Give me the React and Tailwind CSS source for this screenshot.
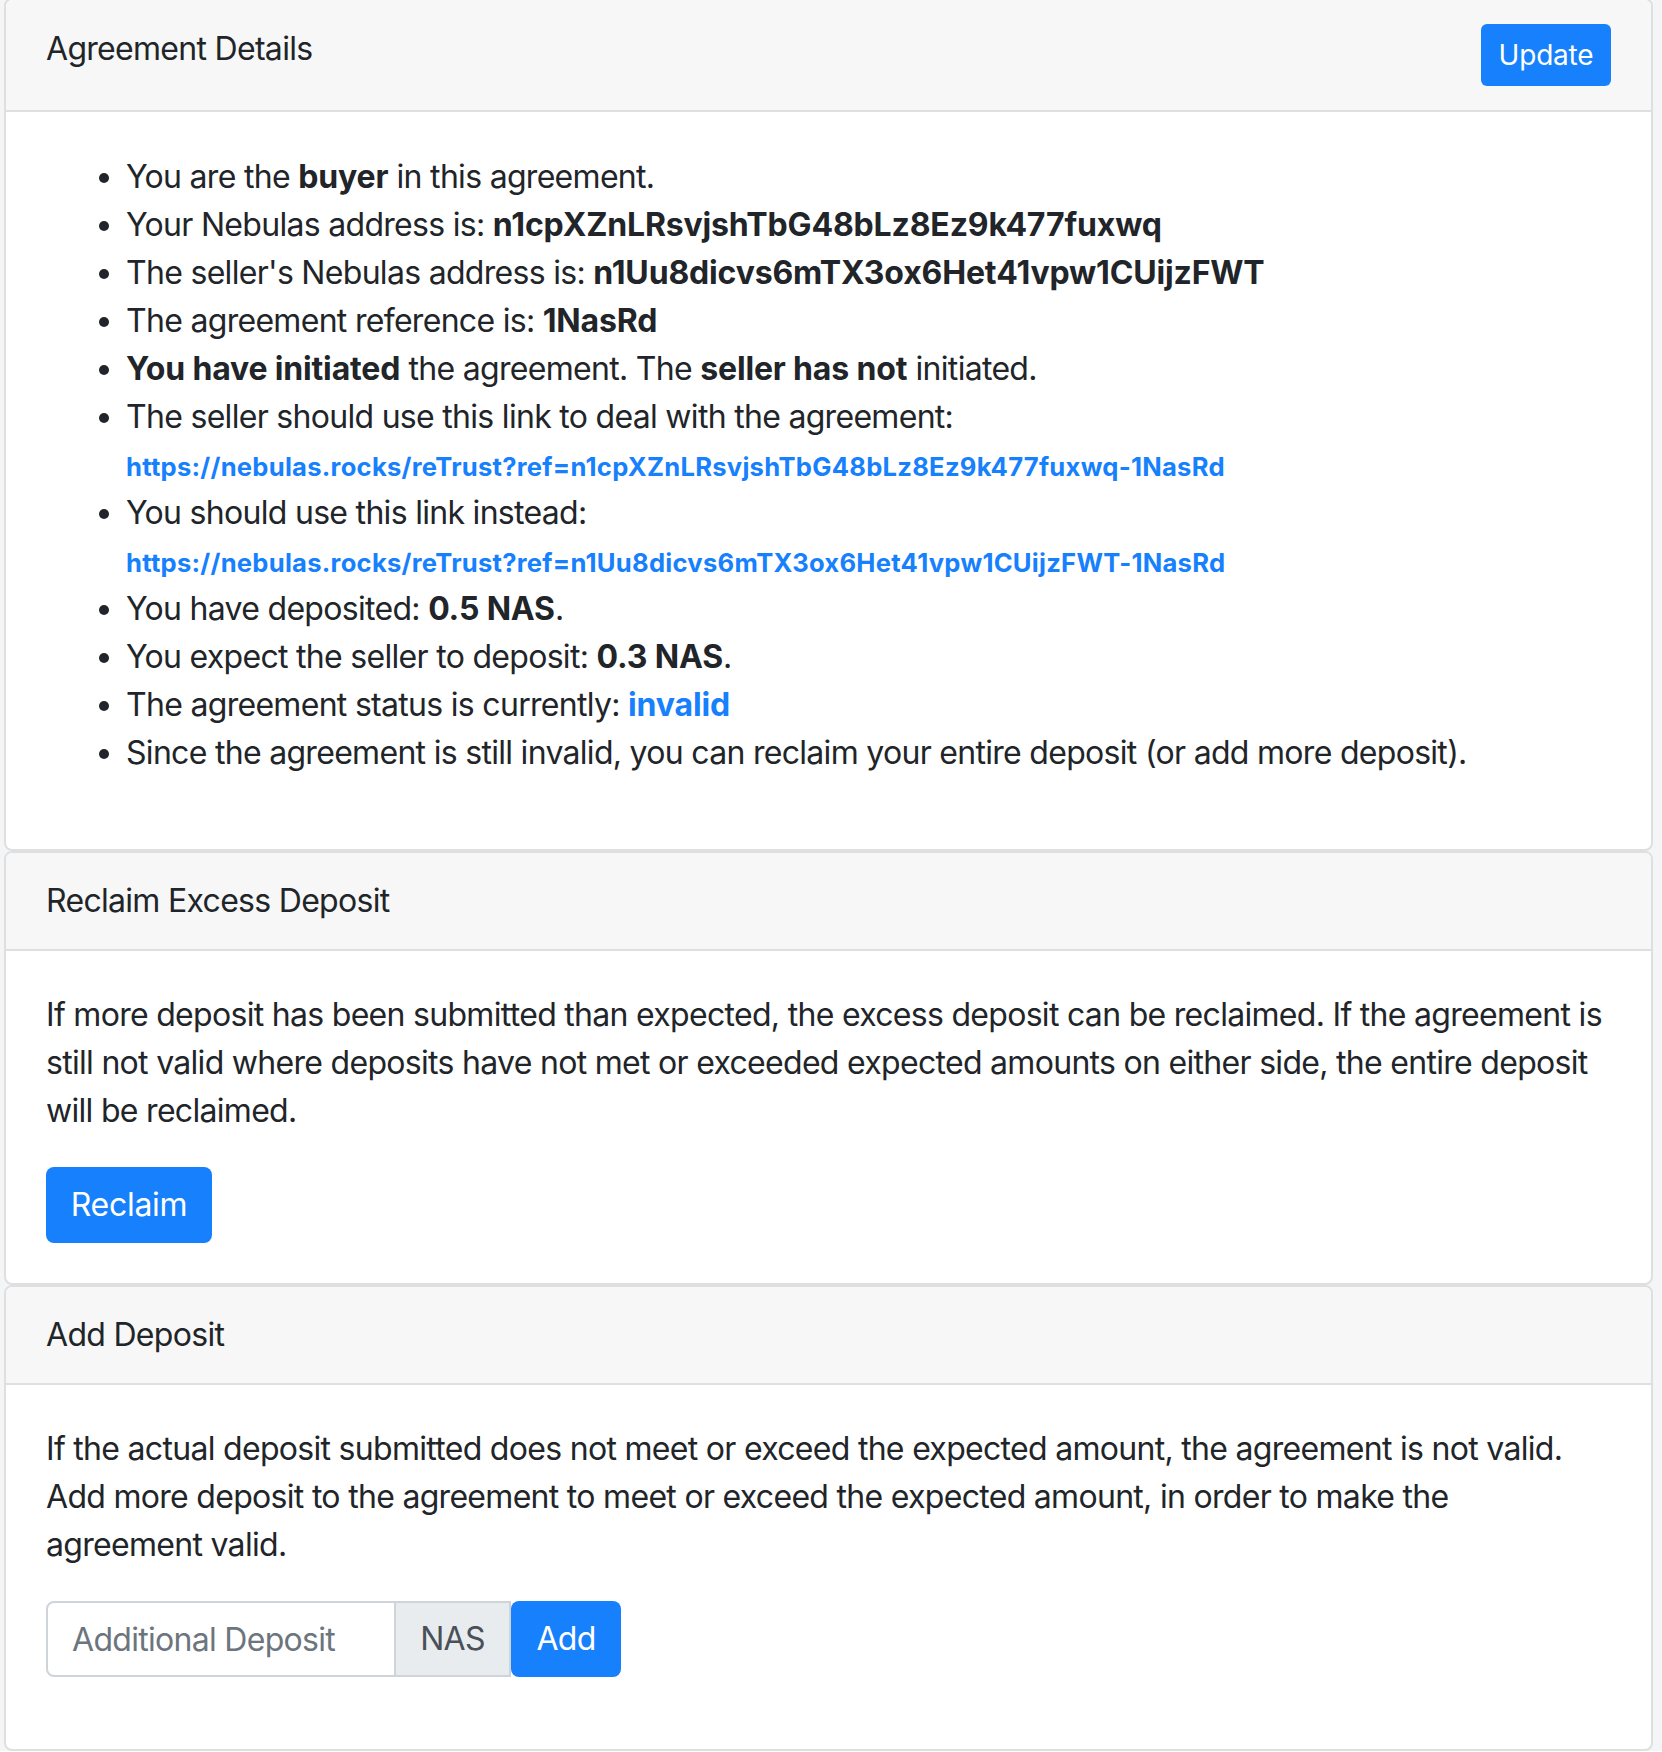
const blue = "text-[#1780fc]";

function CardHeader({ children }) {
  return (
    <div className="flex items-start justify-between border-b-2 border-[#dfdfdf] bg-[#f7f7f7] px-[40px] py-[24px]">
      {children}
    </div>
  );
}

function Card({ className = "", children }) {
  return (
    <div className={`overflow-hidden rounded-[8px] border-2 border-[#dfdfdf] bg-white ${className}`}>
      {children}
    </div>
  );
}

function B({ className = "", children }) {
  return <b className={`font-bold tracking-[-0.16px] ${className}`}>{children}</b>;
}

function Link({ children }) {
  return (
    <>
      <br />
      <a href="#" className={`text-[25.6px] leading-[36px] font-bold tracking-[0.25px] ${blue}`}>
        {children}
      </a>
    </>
  );
}

export default function App() {
  return (
    <div className="min-h-screen bg-[#f4f5f6] pl-[4px] pr-[9px] font-['Inter','Noto_Sans',sans-serif] text-[32px] leading-[48px] tracking-[-0.7px] text-[#212529]">
      <Card className="-mt-[2px]">
        <CardHeader>
          <span className="pt-[1px]">Agreement Details</span>
          <button
            type="button"
            className="h-[62px] w-[130px] rounded-[6px] bg-[#1780fc] text-[28px] leading-[42px] tracking-[-0.2px] text-white"
          >
            Update
          </button>
        </CardHeader>
        <div className="p-[40px]">
          <ul className="mb-[32px] list-disc pt-[1px] pl-[80px]">
            <li>
              You are the <B>buyer</B> in this agreement.
            </li>
            <li>
              Your Nebulas address is: <B>n1cpXZnLRsvjshTbG48bLz8Ez9k477fuxwq</B>
            </li>
            <li>
              The seller's Nebulas address is: <B>n1Uu8dicvs6mTX3ox6Het41vpw1CUijzFWT</B>
            </li>
            <li>
              The agreement reference is: <B>1NasRd</B>
            </li>
            <li>
              <B>You have initiated</B> the agreement. The <B>seller has not</B> initiated.
            </li>
            <li>
              The seller should use this link to deal with the agreement:
              <Link>https://nebulas.rocks/reTrust?ref=n1cpXZnLRsvjshTbG48bLz8Ez9k477fuxwq-1NasRd</Link>
            </li>
            <li>
              You should use this link instead:
              <Link>https://nebulas.rocks/reTrust?ref=n1Uu8dicvs6mTX3ox6Het41vpw1CUijzFWT-1NasRd</Link>
            </li>
            <li>
              You have deposited: <B>0.5 NAS</B>.
            </li>
            <li>
              You expect the seller to deposit: <B>0.3 NAS</B>.
            </li>
            <li>
              The agreement status is currently: <B className={blue}>invalid</B>
            </li>
            <li>
              Since the agreement is still invalid, you can reclaim your entire deposit (or add more deposit).
            </li>
          </ul>
        </div>
      </Card>

      <Card>
        <CardHeader>
          <span>Reclaim Excess Deposit</span>
        </CardHeader>
        <div className="p-[40px]">
          <p className="mb-[32px]">
            If more deposit has been submitted than expected, the excess deposit can be reclaimed. If the agreement is
            still not valid where deposits have not met or exceeded expected amounts on either side, the entire deposit
            will be reclaimed.
          </p>
          <button
            type="button"
            className="h-[76px] w-[166px] rounded-[8px] bg-[#1780fc] text-[32px] leading-[48px] tracking-[-0.3px] text-white"
          >
            Reclaim
          </button>
        </div>
      </Card>

      <Card>
        <CardHeader>
          <span>Add Deposit</span>
        </CardHeader>
        <div className="p-[40px]">
          <p className="mb-[32px]">
            If the actual deposit submitted does not meet or exceed the expected amount, the agreement is not valid. Add
            more deposit to the agreement to meet or exceed the expected amount, in order to make the agreement valid.
          </p>
          <div className="mb-[32px] flex">
            <input
              type="text"
              placeholder="Additional Deposit"
              className="h-[76px] w-[350px] rounded-l-[8px] border-2 border-[#ced4da] bg-white px-[24px] text-[32px] tracking-[-0.7px] text-[#495057] outline-none placeholder:text-[#6c757d]"
            />
            <span className="flex h-[76px] w-[115px] items-center justify-center border-2 border-l-0 border-[#ced4da] bg-[#e9ecef] text-[#495057]">
              NAS
            </span>
            <button
              type="button"
              className="h-[76px] w-[110px] rounded-[8px] bg-[#1780fc] text-[32px] leading-[48px] text-white"
            >
              Add
            </button>
          </div>
        </div>
      </Card>
    </div>
  );
}
